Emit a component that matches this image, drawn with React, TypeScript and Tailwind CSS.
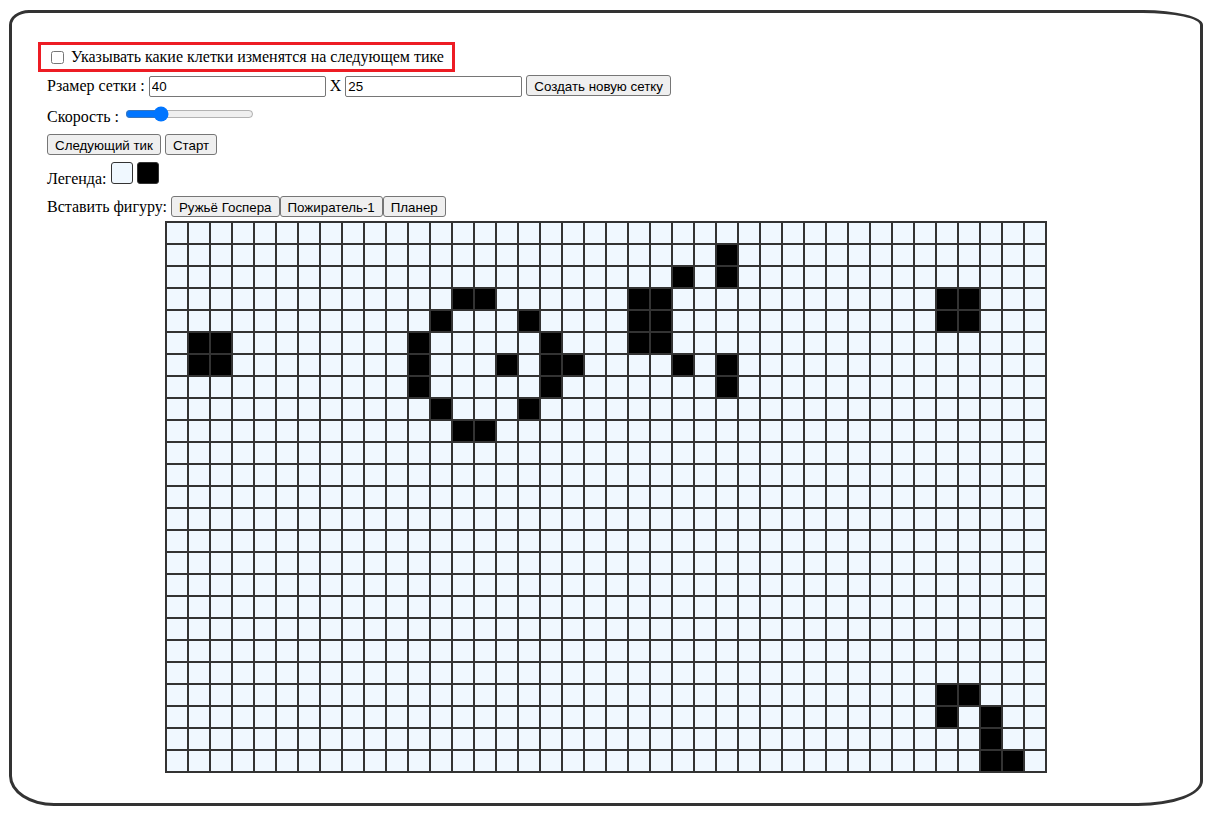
import React from "react";

const ALIVE_LIST: [number, number][] = [
  [5, 1], [5, 2], [6, 1], [6, 2],
  [3, 13], [3, 14], [4, 12], [4, 16], [5, 11], [6, 11], [7, 11], [5, 17], [6, 17], [7, 17],
  [6, 15], [6, 18], [8, 12], [8, 16], [9, 13], [9, 14],
  [3, 21], [3, 22], [4, 21], [4, 22], [5, 21], [5, 22],
  [2, 23], [6, 23], [1, 25], [2, 25], [6, 25], [7, 25],
  [3, 35], [3, 36], [4, 35], [4, 36],
  [21, 35], [21, 36], [22, 35], [22, 37], [23, 37], [24, 37], [24, 38],
];
const ALIVE = new Set(ALIVE_LIST.map(([r, c]) => `${r}-${c}`));

const btn =
  "h-[21px] px-[7px] bg-[#efefef] border border-[#767676] rounded-[3px] text-[13.333px] font-['Liberation_Sans',Arial,sans-serif] text-black align-baseline";
const inp =
  "w-[177px] h-[21px] px-[2px] bg-white border border-[#767676] rounded-[2px] text-[13.333px] font-['Liberation_Sans',Arial,sans-serif] text-black align-baseline outline-none";

export default function App() {
  const rows = Array.from({ length: 25 }, (_, r) => r);
  const cols = Array.from({ length: 40 }, (_, c) => c);
  return (
    <div className="w-[1212px] h-[823px] overflow-hidden bg-white pt-[10px] pl-[9px]">
      <div className="w-[1194px] h-[796px] border-[3px] border-[#333] rounded-[20px_60px_65px_45px/15px_15px_25px_30px] font-['Liberation_Serif','Times_New_Roman',serif] text-[16px] text-black">
        <div className="ml-[26px] mt-[29px] w-[417px] h-[30px] border-[3px] border-[#ed1c24] flex items-center pl-[10px]">
          <input type="checkbox" className="w-[13px] h-[13px] m-0" />
          <span className="ml-[7px]">Указывать какие клетки изменятся на следующем тике</span>
        </div>
        <div className="pl-[35px] mt-[3px] h-[21px] leading-[21px]">
          Рзамер сетки :{" "}
          <input className={inp} defaultValue="40" /> X{" "}
          <input className={inp} defaultValue="25" />{" "}
          <button className={btn}>Создать новую сетку</button>
        </div>
        <div className="pl-[35px] mt-[10px] h-[20px] leading-[20px]">
          Скорость :{" "}
          <input type="range" min={0} max={100} defaultValue={25} className="ml-[2px] w-[129px] align-baseline accent-[#0075ff]" />
        </div>
        <div className="pl-[35px] mt-[8px] h-[21px] leading-[21px]">
          <button className={btn}>Следующий тик</button>{" "}
          <button className={btn}>Старт</button>
        </div>
        <div className="pl-[35px] mt-[7px] h-[26px] flex items-end">
          <span className="leading-[18px]">Легенда:</span>
          <span className="ml-[4px] inline-block w-[22px] h-[22px] bg-[#f0f8ff] border border-[#333] rounded-[3px] mb-[4px]" />
          <span className="ml-[4px] inline-block w-[22px] h-[22px] bg-black border border-[#333] rounded-[3px] mb-[4px]" />
        </div>
        <div className="pl-[35px] mt-[8px] h-[21px] leading-[21px]">
          Вставить фигуру:{" "}
          <button className={btn}>Ружьё Госпера</button>
          <button className={btn}>Пожиратель-1</button>
          <button className={btn}>Планер</button>
        </div>
        <div className="mt-[4px] w-[882px] mx-auto border border-[#333] flex flex-col">
          {rows.map((r) => (
            <div key={r} className="flex">
              {cols.map((c) => (
                <div
                  key={c}
                  className={
                    ALIVE.has(`${r}-${c}`)
                      ? "w-[22px] h-[22px] border border-[#333] bg-black"
                      : "w-[22px] h-[22px] border border-[#333] bg-[#f0f8ff]"
                  }
                />
              ))}
            </div>
          ))}
        </div>
      </div>
    </div>
  );
}
